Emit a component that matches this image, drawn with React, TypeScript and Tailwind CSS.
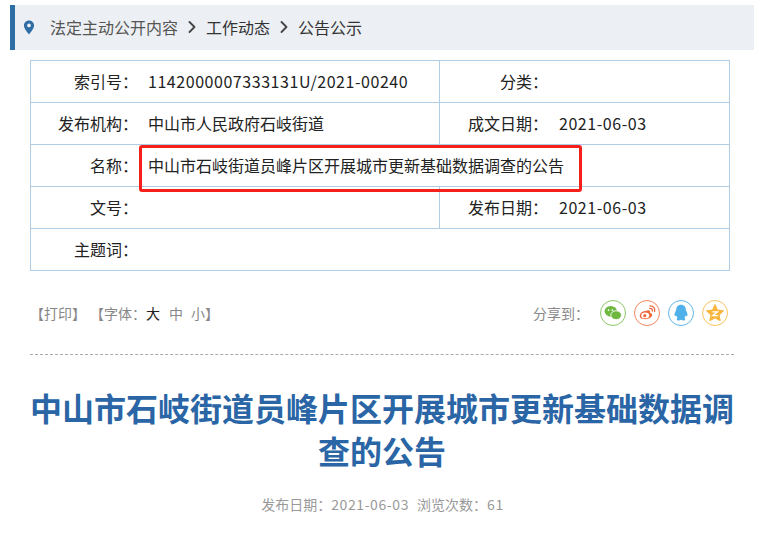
import { ChevronRight } from "lucide-react";

const font = "font-['Microsoft_YaHei','Noto_Sans_CJK_SC','Liberation_Sans',sans-serif]";

function InfoRow({
  label,
  value,
  label2,
  value2,
  numeric,
  last,
}: {
  label: string;
  value?: string;
  label2?: string;
  value2?: string;
  numeric?: boolean;
  last?: boolean;
}) {
  const split = label2 !== undefined;
  return (
    <div className={`flex items-center border-[#b0cde6] ${last ? "h-[41px]" : "h-[42px] border-b"}`}>
      <div className={`flex h-full items-center pb-[2px] ${split ? "w-[409px] border-r border-[#b0cde6]" : "flex-1"}`}>
        <span className="w-[107px] text-right">{label}</span>
        <span className={`ml-[10px] whitespace-nowrap ${numeric ? "tracking-[0.55px]" : ""}`}>{value}</span>
      </div>
      {split && (
        <div className="flex h-full flex-1 items-center pb-[2px]">
          <span className="w-[108px] text-right">{label2}</span>
          <span className="ml-[11px] tracking-[0.55px]">{value2}</span>
        </div>
      )}
    </div>
  );
}

function ShareIcon({ color, children }: { color: string; children: React.ReactNode }) {
  return (
    <div
      className="flex h-[26px] w-[26px] items-center justify-center rounded-full border"
      style={{ borderColor: color }}
    >
      <svg width="20" height="20" viewBox="0 0 18 18">
        {children}
      </svg>
    </div>
  );
}

export default function App() {
  return (
    <div className={`relative h-[534px] w-[765px] overflow-hidden bg-white ${font}`}>
      {/* breadcrumb */}
      <div className="mt-[5px] ml-[10px] flex h-[45px] w-[744px] items-center border-l-[5px] border-[#2f6ea5] bg-[#eceff3] pb-[2px] text-[16px] text-[#333]">
        <svg width="12" height="15" viewBox="0 0 12 16" className="mt-[1px] ml-[8px]">
          <path
            fillRule="evenodd"
            d="M6 0.5C2.9 0.5 0.6 2.9 0.6 5.8 0.6 9.4 4.6 13.4 6 15.5 7.4 13.4 11.4 9.4 11.4 5.8 11.4 2.9 9.1 0.5 6 0.5ZM6 3.8A2 2 0 1 1 6 7.8 2 2 0 0 1 6 3.8Z"
            fill="#2f6ea5"
          />
        </svg>
        <span className="ml-[15px] text-[#555]">法定主动公开内容</span>
        <ChevronRight className="mx-[4px] h-[20px] w-[20px] text-[#444]" strokeWidth={2.2} />
        <span>工作动态</span>
        <ChevronRight className="mx-[4px] h-[20px] w-[20px] text-[#444]" strokeWidth={2.2} />
        <span>公告公示</span>
      </div>

      {/* info table */}
      <div className="mx-[30px] mt-[10px] w-[700px] border border-[#b0cde6] text-[16px] text-[#222]">
        <InfoRow label="索引号：" value="1142000007333131U/2021-00240" numeric label2="分类：" value2="" />
        <InfoRow label="发布机构：" value="中山市人民政府石岐街道" label2="成文日期：" value2="2021-06-03" />
        <InfoRow label="名称：" value="中山市石岐街道员峰片区开展城市更新基础数据调查的公告" />
        <InfoRow label="文号：" value="" label2="发布日期：" value2="2021-06-03" />
        <InfoRow label="主题词：" value="" last />
      </div>

      {/* red highlight over the name row */}
      <div className="absolute top-[145px] left-[139px] h-[47px] w-[443px] rounded-[3px] border-[3px] border-[#f5201a]" />

      {/* tools */}
      <div className="mt-[28px] ml-[30px] flex h-[28px] w-[698px] items-center justify-between text-[14px] text-[#888]">
        <div className="flex items-center">
          <span>【打印】</span>
          <span className="ml-[4px]">【字体：</span>
          <span className="text-[#222]">大</span>
          <span className="ml-[9px]">中</span>
          <span className="ml-[8px]">小</span>
          <span>】</span>
        </div>
        <div className="flex items-center">
          <span className="mr-[11px]">分享到：</span>
          <div className="flex gap-[8px]">
            <ShareIcon color="#8cc866">
              <ellipse cx="7" cy="7.5" rx="5.6" ry="4.8" fill="#6fb83f" />
              <ellipse cx="11.8" cy="11" rx="4.8" ry="4" fill="#6fb83f" stroke="#fff" strokeWidth="0.8" />
              <circle cx="5" cy="6.4" r="0.8" fill="#fff" />
              <circle cx="8.4" cy="6.4" r="0.8" fill="#fff" />
            </ShareIcon>
            <ShareIcon color="#f5845f">
              <path
                d="M7.6 7.2C10.8 5.6 12.4 6.6 11.6 8.8 14 9.4 14.2 11 13 12.4 11.4 14.4 7.8 15.2 4.8 14.2 2.4 13.4 1.8 11.4 3 9.6 4.2 8 6 7 7.6 7.2Z"
                fill="#f0693c"
              />
              <ellipse cx="7.4" cy="11.2" rx="3.6" ry="2.6" fill="#fff" />
              <circle cx="7" cy="11.4" r="1.4" fill="#f0693c" />
              <path d="M11.6 2.6C14.6 2.4 16.6 4.8 15.8 7.6M11.6 4.8C13 4.6 14.2 5.8 13.8 7.2" fill="none" stroke="#f0693c" strokeWidth="1.2" strokeLinecap="round" />
            </ShareIcon>
            <ShareIcon color="#62b5ea">
              <path
                d="M9 1.6C12 1.6 13.4 3.8 13.4 6.6 14.4 8.4 15.4 10.6 14.6 11.8 14.2 12.2 13.6 11.6 13.2 11 13 12.2 12.6 13 12 13.6 12.8 14 13.2 14.6 12.6 15.2 11.6 16 9.8 15.6 9 15 8.2 15.6 6.4 16 5.4 15.2 4.8 14.6 5.2 14 6 13.6 5.4 13 5 12.2 4.8 11 4.4 11.6 3.8 12.2 3.4 11.8 2.6 10.6 3.6 8.4 4.6 6.6 4.6 3.8 6 1.6 9 1.6Z"
                fill="#4fb0ea"
              />
            </ShareIcon>
            <ShareIcon color="#fbc35e">
              <path
                d="M9 1.6L11.2 6.4 16.4 7 12.6 10.6 13.6 15.8 9 13.2 4.4 15.8 5.4 10.6 1.6 7 6.8 6.4Z"
                fill="#f9b53c"
                stroke="#f9b53c"
                strokeLinejoin="round"
              />
              <path d="M6.6 8H11.2L7 11.4H11.6" fill="none" stroke="#fff" strokeWidth="1.2" />
            </ShareIcon>
          </div>
        </div>
      </div>

      {/* divider */}
      <div className="mt-[27px] ml-[30px] w-[704px] border-t border-dashed border-[#aaa]" />

      {/* title */}
      <h1 className="mx-[30px] mt-[31px] w-[704px] text-center text-[32px] leading-[43px] font-bold text-[#2a65a5]">
        中山市石岐街道员峰片区开展城市更新基础数据调查的公告
      </h1>

      <div className="mt-[20px] flex justify-center text-[14px] leading-[24px] text-[#999]">
        <span>发布日期：</span>
        <span className="tracking-[0.6px]">2021-06-03</span>
        <span className="ml-[8px]">浏览次数：</span>
        <span className="tracking-[0.6px]">61</span>
      </div>
    </div>
  );
}
